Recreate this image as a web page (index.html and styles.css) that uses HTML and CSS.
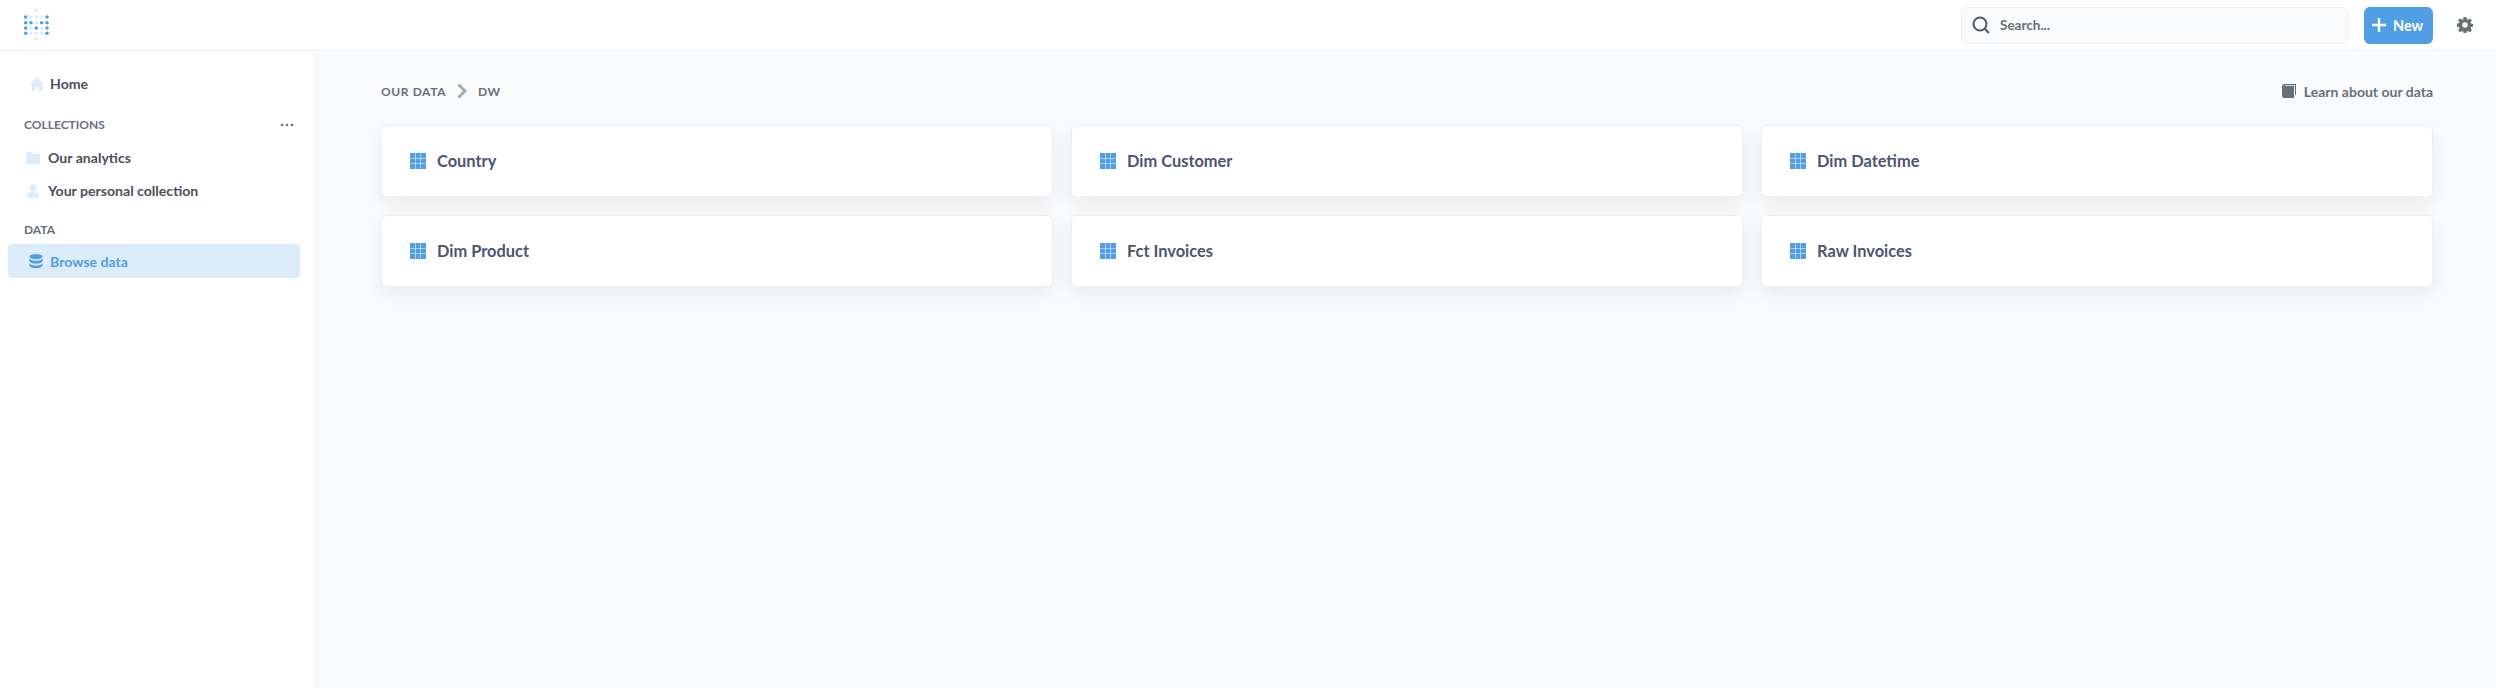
FILE: index.html
```html
<!DOCTYPE html>
<html lang="en">
<head>
  <meta charset="UTF-8">
  <title>Browse data</title>
  <link rel="stylesheet" href="styles.css">
</head>
<body>
  <header class="topbar">
    <svg class="logo" width="32" height="38" viewBox="0 0 32 38">
      <g fill="#509ee3">
        <circle cx="2.700" cy="8" r="1.800"/>
        <circle cx="24" cy="8" r="1.800"/>
        <circle cx="2.700" cy="13.700" r="1.800"/><circle cx="8" cy="13.700" r="1.800"/><circle cx="18.700" cy="13.700" r="1.800"/><circle cx="24" cy="13.700" r="1.800"/>
        <circle cx="2.700" cy="19" r="1.800"/><circle cx="13.300" cy="19" r="1.800"/><circle cx="24" cy="19" r="1.800"/>
        <circle cx="2.700" cy="24.300" r="1.800"/><circle cx="24" cy="24.300" r="1.800"/>
      </g>
      <g fill="#ddecfa">
        <circle cx="13.300" cy="1.700" r="1.800"/>
        <circle cx="8" cy="8" r="1.800"/><circle cx="13.300" cy="8" r="1.800"/><circle cx="18.700" cy="8" r="1.800"/>
        <circle cx="13.300" cy="13.700" r="1.800"/>
        <circle cx="8" cy="19" r="1.800"/><circle cx="18.700" cy="19" r="1.800"/>
        <circle cx="8" cy="24.300" r="1.800"/><circle cx="13.300" cy="24.300" r="1.800"/><circle cx="18.700" cy="24.300" r="1.800"/>
        <circle cx="13.300" cy="29.700" r="1.800"/>
      </g>
    </svg>
    <div class="topbar-right">
      <div class="search">
        <svg width="18" height="18" viewBox="0 0 18 18" fill="none" stroke="#4c5773" stroke-width="2">
          <circle cx="8" cy="8" r="6.500"/><path d="M12.800 12.800 L17 17"/>
        </svg>
        <span>Search...</span>
      </div>
      <button class="new-btn">
        <svg width="14" height="14" viewBox="0 0 14 14" fill="none" stroke="#fff" stroke-width="2.400"><path d="M7 0V14M0 7H14"/></svg>
        New
      </button>
      <svg class="gear" width="16" height="16" viewBox="0 0 16 16">
        <path fill="#696e7b" fill-rule="evenodd" d="M6.600 0h2.800l.4 2.200 1.200.5 1.900-1.300 2 2-1.300 1.800.5 1.300 2 .4v2.800l-2 .4-.5 1.200 1.300 1.900-2 2-1.900-1.300-1.200.5-.4 2H6.600l-.4-2-1.200-.5-1.900 1.300-2-2 1.300-1.900-.5-1.200-2-.4V6.700l2-.4.5-1.300-1.300-1.800 2-2L5 2.700l1.200-.5zM8 5.300a2.700 2.700 0 1 0 0 5.400 2.700 2.700 0 0 0 0-5.400z"/>
      </svg>
    </div>
  </header>

  <div class="layout">
    <nav class="sidebar">
      <a class="nav-item home">
        <svg width="16" height="16" viewBox="0 0 16 16" fill="#ddecfa"><path d="M8 1.500 15 8v.6h-1.700V15H9.800v-4.200H6.200V15H2.700V8.600H1V8z"/></svg>
        Home
      </a>
      <div class="nav-heading collections-heading">
        <span>COLLECTIONS</span>
        <svg width="14" height="4" viewBox="0 0 14 4" fill="#696e7b"><circle cx="2" cy="2" r="1.300"/><circle cx="7" cy="2" r="1.300"/><circle cx="12" cy="2" r="1.300"/></svg>
      </div>
      <a class="nav-item collection">
        <svg width="14" height="12" viewBox="0 0 16 14" fill="#ddecfa"><path d="M0 1.500C0 .7.600 0 1.400 0h4.200l1.800 2.400h7.200c.8 0 1.400.6 1.400 1.400v8.800c0 .8-.6 1.400-1.400 1.400H1.400C.6 14 0 13.400 0 12.600z"/></svg>
        Our analytics
      </a>
      <a class="nav-item collection">
        <svg width="14" height="14" viewBox="0 0 16 16" fill="#ddecfa"><circle cx="8" cy="4.500" r="3.800"/><path d="M6 8h4v1.500c2.500.6 5 1.500 5 3.500 0 2-3 3-7 3s-7-1-7-3c0-2 2.500-2.900 5-3.500z"/></svg>
        Your personal collection
      </a>
      <div class="nav-heading data-heading">DATA</div>
      <a class="nav-item active">
        <svg width="14" height="14" viewBox="0 0 16 16" fill="#509ee3"><ellipse cx="8" cy="3" rx="7.500" ry="3"/><path d="M.5 5c1 1.800 4 2.600 7.500 2.600S14.500 6.800 15.500 5v3c0 1.700-3.400 3-7.500 3S.5 9.700.5 8z"/><path d="M.5 10.500c1 1.800 4 2.600 7.500 2.600s6.500-.8 7.500-2.600V13c0 1.700-3.400 3-7.500 3S.5 14.700.5 13z"/></svg>
        Browse data
      </a>
    </nav>

    <main class="content">
      <div class="content-head">
        <div class="breadcrumbs">
          <span>OUR DATA</span>
          <svg width="10" height="16" viewBox="0 0 10 16" fill="none" stroke="#a5a9b5" stroke-width="3"><path d="M1.500 1.500 8 8l-6.500 6.500"/></svg>
          <span>DW</span>
        </div>
        <a class="learn">
          <svg width="14" height="14" viewBox="0 0 14 14" fill="#696e7b"><path d="M0 2.500C0 1.100 1.100 0 2.500 0H14v11h-1V1.200H3V2h9v12H2.500C1.100 14 0 12.900 0 11.500z"/></svg>
          Learn about our data
        </a>
      </div>
      <div class="table-grid">
        <a class="table-card"><svg class="grid-icon" width="16" height="16"><use href="#table"/></svg>Country</a>
        <a class="table-card"><svg class="grid-icon" width="16" height="16"><use href="#table"/></svg>Dim Customer</a>
        <a class="table-card"><svg class="grid-icon" width="16" height="16"><use href="#table"/></svg>Dim Datetime</a>
        <a class="table-card"><svg class="grid-icon" width="16" height="16"><use href="#table"/></svg>Dim Product</a>
        <a class="table-card"><svg class="grid-icon" width="16" height="16"><use href="#table"/></svg>Fct Invoices</a>
        <a class="table-card"><svg class="grid-icon" width="16" height="16"><use href="#table"/></svg>Raw Invoices</a>
      </div>
    </main>
  </div>

  <svg width="0" height="0" class="defs">
    <symbol id="table" viewBox="0 0 16 16">
      <path fill="#509ee3" d="M0 0h5v5H0zM5.500 0h5v5h-5zM11 0h5v5h-5zM0 5.500h5v5H0zM5.500 5.500h5v5h-5zM11 5.500h5v5h-5zM0 11h5v5H0zM5.500 11h5v5h-5zM11 11h5v5h-5z"/>
    </symbol>
  </svg>
</body>
</html>
```

FILE: styles.css
```css
* {
  box-sizing: border-box;
}

html, body {
  height: 100%;
}

body {
  margin: 0;
  font-family: Lato, "Noto Sans", sans-serif;
  font-weight: 700;
  color: #4c5773;
  background-color: #f9fbfc;
  overflow: hidden;
}

.defs {
  display: block;
  height: 0;
}

.topbar {
  display: flex;
  justify-content: space-between;
  align-items: center;
  height: 51px;
  padding: 0 23px;
  background: #fff;
  border-bottom: 1px solid #eeeff1;
}

.logo {
  margin-top: 5px;
}

.topbar-right {
  display: flex;
  align-items: center;
}

.search {
  display: flex;
  align-items: center;
  gap: 10px;
  width: 387px;
  height: 37px;
  padding: 0 10px 1px;
  font-size: 13.5px;
  color: #696e7b;
  background: #f9fbfc;
  border: 1px solid #eeeff1;
  border-radius: 6px;
}

.new-btn {
  display: flex;
  align-items: center;
  gap: 7px;
  width: 69px;
  height: 37px;
  margin-left: 16px;
  padding: 0 8px;
  font: inherit;
  font-size: 14.5px;
  color: #fff;
  background: #509ee3;
  border: none;
  border-radius: 6px;
}

.gear {
  margin-left: 24px;
}

.layout {
  display: flex;
  height: calc(100% - 51px);
}

.sidebar {
  flex: none;
  width: 317px;
  padding: 16px 16px 0 8px;
  background: #fff;
  border-right: 1px solid #eeeff1;
}

.nav-item {
  display: flex;
  align-items: center;
  height: 33px;
  padding-left: 21px;
  font-size: 14.1px;
  color: #4b4f5b;
  border-radius: 4px;
}

.nav-item svg {
  flex: none;
  margin-right: 7px;
}

.nav-item.home svg {
  margin-right: 5px;
}

.nav-item.collection {
  padding-left: 18px;
}

.nav-item.collection svg {
  margin-right: 8px;
}

.nav-item.active {
  height: 34px;
  color: #509ee3;
  background: #ddecfa;
}

.nav-heading {
  padding-left: 16px;
  font-size: 12px;
  color: #696e7b;
}

.collections-heading {
  display: flex;
  justify-content: space-between;
  align-items: center;
  margin-top: 17px;
  margin-bottom: 9px;
  padding-right: 6px;
}

.data-heading {
  margin-top: 15px;
  margin-bottom: 7px;
}

.content {
  flex: 1;
  padding: 27px 63px 0 64px;
}

.content-head {
  display: flex;
  justify-content: space-between;
  align-items: center;
  height: 26px;
  margin-bottom: 21px;
}

.breadcrumbs {
  display: flex;
  align-items: center;
  gap: 11px;
  font-size: 12px;
  letter-spacing: 0.6px;
  color: #696e7b;
}

.learn {
  display: flex;
  align-items: center;
  gap: 8px;
  font-size: 14px;
  color: #696e7b;
}

.table-grid {
  display: grid;
  grid-template-columns: repeat(3, 1fr);
  gap: 18px;
}

.table-card {
  display: flex;
  align-items: center;
  gap: 11px;
  height: 72px;
  padding: 0 0 1px 28px;
  font-size: 16.4px;
  color: #4c5570;
  background: #fff;
  border: 1px solid #f0f0f2;
  border-radius: 6px;
  box-shadow: 0 7px 20px rgba(0, 0, 0, 0.07);
}

.grid-icon {
  flex: none;
}
```
